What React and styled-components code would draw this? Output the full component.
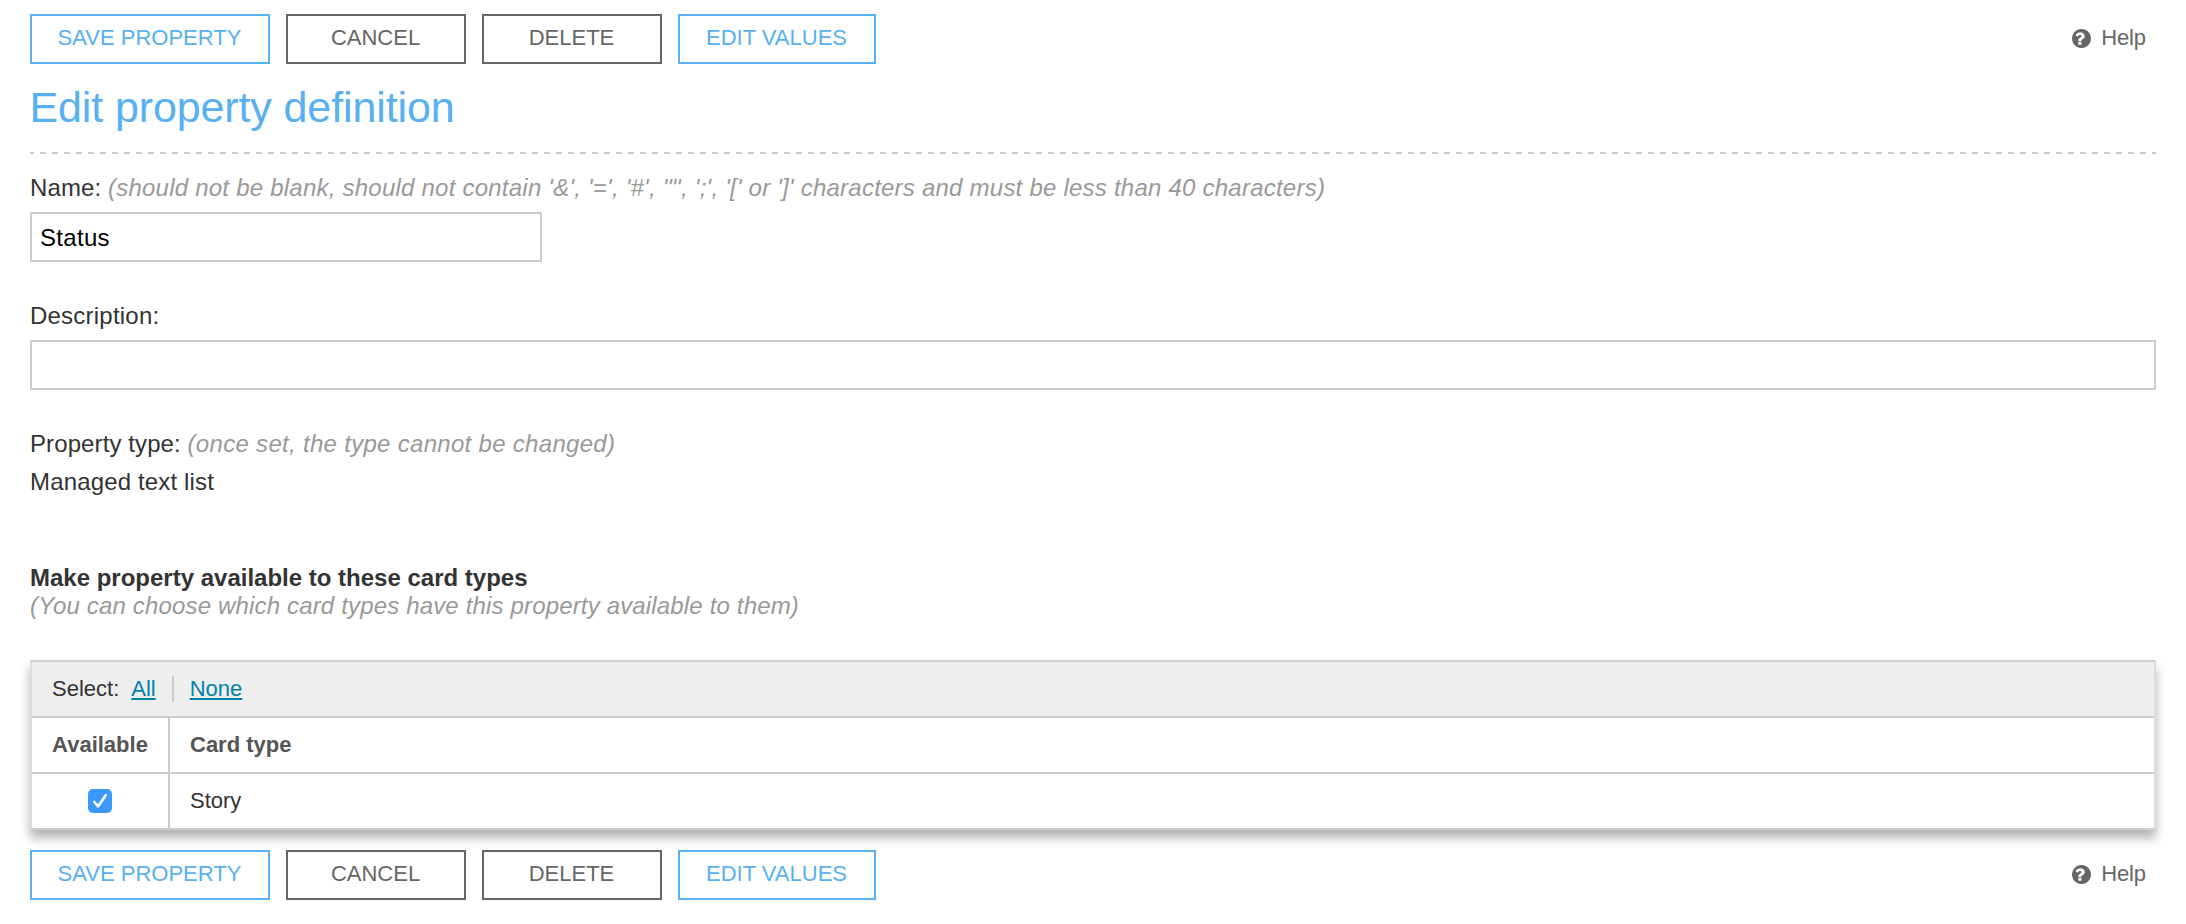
import React, { useState } from "react";
import styled, { createGlobalStyle } from "styled-components";

const GlobalStyle = createGlobalStyle`
  body {
    margin: 0;
    background: #fff;
    color: #333;
    font: 24px/28px "Liberation Sans", Arial, Helvetica, sans-serif;
  }
  *, *::before, *::after { box-sizing: border-box; }
`;

const Page = styled.main`
  padding: 14px 30px 24px;
`;

const ActionBar = styled.div`
  display: flex;
  align-items: center;
  gap: 16px;
  height: 50px;
`;

const ActionButton = styled.button`
  width: ${({ $width }) => $width}px;
  height: 50px;
  padding: 0 1px 2px 0;
  border: 2px solid currentColor;
  border-radius: 0;
  background: #fff;
  color: ${({ $primary }) => ($primary ? "#56b0f2" : "#666")};
  font: 22px/26px "Liberation Sans", Arial, Helvetica, sans-serif;
  text-transform: uppercase;
  white-space: nowrap;
  cursor: pointer;
`;

const HelpLink = styled.a`
  display: flex;
  align-items: center;
  gap: 10px;
  margin-left: auto;
  padding: 0 10px 2px 0;
  color: #666;
  font-size: 22px;
  line-height: 26px;
  letter-spacing: -0.1px;
  text-decoration: none;
`;

const HelpGlyph = styled.svg`
  width: 19px;
  height: 19px;
  fill: currentColor;
`;

const Title = styled.h1`
  margin: 18px 0 0;
  padding-bottom: 20px;
  color: #56b0f2;
  font-size: 43px;
  font-weight: 400;
  line-height: 50px;
  letter-spacing: -0.12px;
  text-indent: -0.5px;
`;

const DashedRule = styled.hr`
  height: 2px;
  margin: 0 0 20px;
  border: 0;
  background: linear-gradient(to right, #ccc 50%, transparent 50%) -2px 0 / 12px 2px repeat-x;
`;

const Field = styled.section`
  margin-bottom: 40px;
`;

const Label = styled.label`
  display: block;
  letter-spacing: ${({ $tracking = 0.1 }) => $tracking}px;
`;

const Hint = styled.em`
  color: #999;
  letter-spacing: ${({ $tracking = 0.23 }) => $tracking}px;
`;

const TextInput = styled.input`
  display: block;
  width: ${({ $width }) => $width};
  height: 50px;
  margin-top: 10px;
  padding: 1px 8px 0;
  border: 2px solid #ccc;
  border-radius: 0;
  outline: 0;
  background: #fff;
  color: #000;
  font: 24px/28px "Liberation Sans", Arial, Helvetica, sans-serif;
  letter-spacing: 0.3px;
`;

const FieldValue = styled.div`
  margin-top: 10px;
  letter-spacing: 0.15px;
`;

const Availability = styled.section`
  margin-top: 68px;
`;

const SectionTitle = styled.h2`
  margin: 0;
  font-size: 24px;
  font-weight: 700;
  line-height: 28px;
`;

const CardTable = styled.div`
  margin: 40px 0 20px;
  border: 2px solid #ccc;
  border-left-color: #ddd;
  border-right-color: #ddd;
  background: #fff;
  box-shadow: 0 8px 10px rgba(0, 0, 0, 0.3);
  font-size: 22px;
  line-height: 26px;
`;

const SelectRow = styled.div`
  display: flex;
  align-items: center;
  height: 54px;
  padding-left: 20px;
  background: #eee;
`;

const SelectLink = styled.a`
  color: #0082ab;
  text-decoration: underline;
  text-decoration-thickness: 2px;
  text-underline-offset: 2px;
  text-decoration-skip-ink: none;
`;

const SelectLabel = styled.span`
  margin-right: 12px;
`;

const Divider = styled.span`
  width: 2px;
  height: 26px;
  margin: 0 16px;
  background: #ccc;
`;

const TableRow = styled.div`
  display: grid;
  grid-template-columns: 138px 1fr;
  height: 56px;
  border-top: 2px solid #ccc;
  color: ${({ $head }) => ($head ? "#555" : "#333")};
  font-weight: ${({ $head }) => ($head ? 700 : 400)};
`;

const AvailableCell = styled.div`
  display: flex;
  align-items: center;
  justify-content: center;
  border-right: 2px solid #ccc;
`;

const TypeCell = styled.div`
  display: flex;
  align-items: center;
  padding-left: 20px;
`;

const CheckButton = styled.button`
  display: flex;
  width: 24px;
  height: 24px;
  padding: 0;
  border: ${({ $on }) => ($on ? "0" : "1px solid #bbb")};
  border-radius: 5px;
  background: ${({ $on }) => ($on ? "#3b99fc" : "#fff")};
`;

const HELP_PATH =
  "M896 1376v-192q0-14-9-23t-23-9h-192q-14 0-23 9t-9 23v192q0 14 9 23t23 9h192q14 0 23-9t9-23zm256-672q0-88-55.500-163t-138.500-116-170-41q-243 0-371 213-15 24 8 42l132 100q7 6 19 6 16 0 25-12 53-68 86-92 34-24 86-24 48 0 85.500 26t37.500 59q0 38-20 61t-68 45q-63 28-115.500 86.500t-52.500 125.500v36q0 14 9 23t23 9h192q14 0 23-9t9-23q0-19 21.500-49.500t54.500-49.500q32-18 49-28.500t46-35 44.500-48 28-60.500 12.500-81zm512 192q0 209-103 385.500t-279.500 279.500-385.500 103-385.500-103-279.500-279.500-103-385.500 103-385.500 279.500-279.500 385.500-103 385.500 103 279.500 279.500 103 385.500z";

function Actions() {
  return (
    <ActionBar>
      <ActionButton $primary $width={240}>Save property</ActionButton>
      <ActionButton $width={180}>Cancel</ActionButton>
      <ActionButton $width={180}>Delete</ActionButton>
      <ActionButton $primary $width={198}>Edit values</ActionButton>
      <HelpLink href="#">
        <HelpGlyph viewBox="128 128 1536 1536" aria-hidden="true">
          <path d={HELP_PATH} />
        </HelpGlyph>
        Help
      </HelpLink>
    </ActionBar>
  );
}

export default function App() {
  const [available, setAvailable] = useState(true);

  return (
    <>
      <GlobalStyle />
      <Page>
        <Actions />
        <Title>Edit property definition</Title>
        <DashedRule />

        <Field>
          <Label htmlFor="name">
            Name:{" "}
            <Hint>
              {"(should not be blank, should not contain '&', '=', '#', '\"', ';', '[' or ']' characters and must be less than 40 characters)"}
            </Hint>
          </Label>
          <TextInput id="name" $width="512px" defaultValue="Status" />
        </Field>

        <Field>
          <Label htmlFor="description" $tracking={0.22}>Description:</Label>
          <TextInput id="description" $width="100%" />
        </Field>

        <Field>
          <Label as="div">
            Property type: <Hint $tracking={0.3}>(once set, the type cannot be changed)</Hint>
          </Label>
          <FieldValue>Managed text list</FieldValue>
        </Field>

        <Availability>
          <SectionTitle>Make property available to these card types</SectionTitle>
          <Hint $tracking={0.16}>
            (You can choose which card types have this property available to them)
          </Hint>
          <CardTable>
            <SelectRow>
              <SelectLabel>Select:</SelectLabel>
              <SelectLink onClick={() => setAvailable(true)}>All</SelectLink>
              <Divider />
              <SelectLink onClick={() => setAvailable(false)}>None</SelectLink>
            </SelectRow>
            <TableRow $head>
              <AvailableCell>Available</AvailableCell>
              <TypeCell>Card type</TypeCell>
            </TableRow>
            <TableRow>
              <AvailableCell>
                <CheckButton
                  role="checkbox"
                  aria-checked={available}
                  aria-label="Story"
                  $on={available}
                  onClick={() => setAvailable(!available)}
                >
                  {available && (
                    <svg width="24" height="24" viewBox="0 0 24 24" fill="none" stroke="#fff" strokeWidth="2.6" strokeLinecap="round" strokeLinejoin="round">
                      <path d="M6.3 13L10.2 17.4L17.7 6.2" />
                    </svg>
                  )}
                </CheckButton>
              </AvailableCell>
              <TypeCell>Story</TypeCell>
            </TableRow>
          </CardTable>
        </Availability>

        <Actions />
      </Page>
    </>
  );
}
